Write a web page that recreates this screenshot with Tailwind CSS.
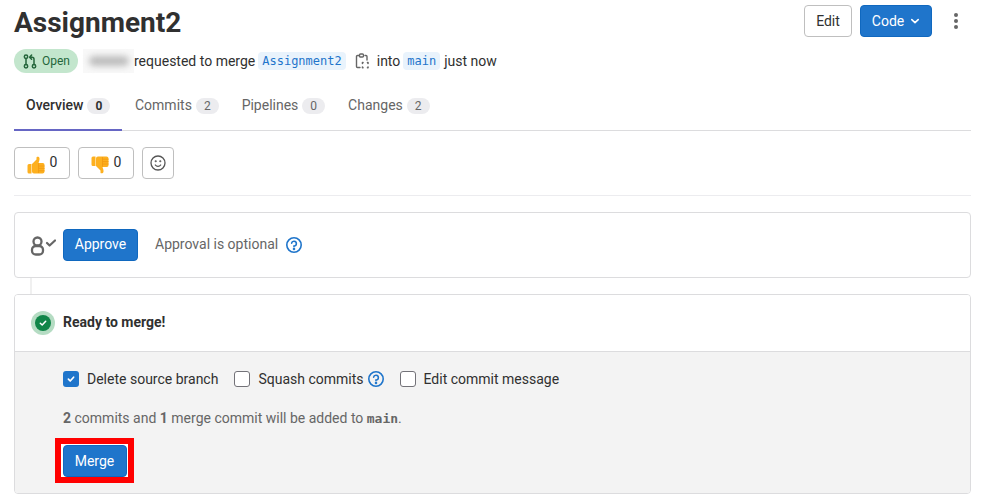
<!DOCTYPE html>
<html lang="en">
<head>
    <meta charset="UTF-8">
    <title>Assignment2</title>
    <script src="https://cdn.jsdelivr.net/npm/@tailwindcss/browser@4"></script>
</head>
<body class="bg-white h-[502px] overflow-hidden font-['Roboto',sans-serif] text-[14px] text-[#303030]">
    <div class="ml-[14px] w-[957px]">
        <!-- Title row -->
        <div class="flex items-start justify-between h-[46px] pt-[5px]">
            <h1 class="text-[28px] leading-[36px] font-bold text-[#303030]">Assignment2</h1>
            <div class="flex items-center">
                <button class="h-[32px] w-[48px] border border-[#bfbfbf] rounded-[4px] text-[#303030] bg-white">Edit</button>
                <button class="ml-[8px] h-[32px] w-[72px] rounded-[4px] bg-[#1f75cb] border border-[#1068bf] text-white flex items-center justify-center gap-[6px]">
                    Code
                    <svg width="10" height="10" viewBox="0 0 10 10" fill="none" stroke="white" stroke-width="1.6" stroke-linecap="round" stroke-linejoin="round"><path d="M1.8 3.6 5 6.6l3.2-3"/></svg>
                </button>
                <div class="ml-[22px] mr-[13px] flex flex-col gap-[2px]">
                    <span class="w-[4px] h-[4px] rounded-full bg-[#666]"></span>
                    <span class="w-[4px] h-[4px] rounded-full bg-[#666]"></span>
                    <span class="w-[4px] h-[4px] rounded-full bg-[#666]"></span>
                </div>
            </div>
        </div>

        <!-- Status line -->
        <div class="flex items-center h-[24px] mt-[3px]">
            <span class="flex items-center h-[24px] w-[64px] pl-[9px] rounded-full bg-[#c3e6cd] text-[#24663b] text-[12px] gap-[5px] shrink-0">
                <svg width="14" height="15" viewBox="0 0 14 15" fill="none" stroke="#24663b" stroke-width="1.5" stroke-linecap="round" stroke-linejoin="round"><circle cx="3" cy="2.8" r="1.7"/><circle cx="3" cy="12.2" r="1.7"/><circle cx="11" cy="12.2" r="1.7"/><path d="M3 4.5v6M11 10.5V5.2a2 2 0 0 0-2-2H7M8.6 1 6.6 3.2l2 2"/></svg>
                Open
            </span>
            <span class="ml-[5px] w-[51px] h-[24px] flex items-center justify-center bg-[#f8f8f8]">
                <span class="w-[40px] h-[10px] bg-[#bdbdbd] rounded-full blur-[3px]"></span>
            </span>
            <span>requested to merge</span>
            <code class="ml-[3px] px-[4px] h-[18px] leading-[18px] rounded-[4px] bg-[#e9f3fc] text-[#1f75cb] font-['DejaVu_Sans_Mono',monospace] text-[12px]">Assignment2</code>
            <svg class="ml-[9px]" width="15" height="16" viewBox="0 0 15 16" fill="none" stroke="#666" stroke-width="1.4" stroke-linecap="round" stroke-linejoin="round"><path d="M4 2.5H2.5A1 1 0 0 0 1.5 3.5v10a1 1 0 0 0 1 1H5M10 2.5h1a1 1 0 0 1 1 1V7"/><rect x="4.5" y="1" width="4" height="3" rx="1"/><path d="M8 9.5H7.5v1M12.5 9.5h.5v1M13 14v.7h-.5M8 14.7h-.5V14" stroke-width="1.6"/></svg>
            <span class="ml-[7px]">into</span>
            <code class="ml-[3px] px-[4px] h-[18px] leading-[18px] rounded-[4px] bg-[#e9f3fc] text-[#1f75cb] font-['DejaVu_Sans_Mono',monospace] text-[12px]">main</code>
            <span class="ml-[4px]">just now</span>
        </div>

        <!-- Tabs -->
        <div class="flex mt-[9px] h-[49px] border-b border-[#dcdcde]">
            <div class="flex items-center gap-[4px] w-[108px] pl-[12px] h-[49px] border-b-2 border-[#6666c4] font-medium text-[#303030]">
                Overview
                <span class="h-[16px] px-[8px] rounded-full bg-[#ececef] text-[12px] leading-[16px] font-bold">0</span>
            </div>
            <div class="flex items-center gap-[4px] ml-[13px] pb-[2px] text-[#666]">
                Commits
                <span class="h-[16px] mt-[2px] px-[8px] rounded-full bg-[#ececef] text-[12px] leading-[16px]">2</span>
            </div>
            <div class="flex items-center gap-[4px] ml-[23px] pb-[2px] text-[#666]">
                Pipelines
                <span class="h-[16px] mt-[2px] px-[8px] rounded-full bg-[#ececef] text-[12px] leading-[16px]">0</span>
            </div>
            <div class="flex items-center gap-[4px] ml-[23px] pb-[2px] text-[#666]">
                Changes
                <span class="h-[16px] mt-[2px] px-[8px] rounded-full bg-[#ececef] text-[12px] leading-[16px]">2</span>
            </div>
        </div>

        <!-- Award emoji -->
        <div class="flex items-center gap-[8px] pt-[16px] pb-[16px] border-b border-[#ececef]">
            <button class="h-[32px] w-[56px] border border-[#bfbfbf] rounded-[4px] flex items-center justify-center gap-[5px]">
                <svg class="mt-[4px]" width="18" height="18" viewBox="0 0 18 18"><path d="M.5 9.5A1.5 1.5 0 0 1 2 8h2.5v9.5H2A1.5 1.5 0 0 1 .5 16zM5 8l4.5-4.5V1.6C9.5.4 12.2.2 12.5 2.2 12.7 4 12 5.5 11.5 7H15.5A1.8 1.8 0 0 1 17.5 8.800V15.500A2 2 0 0 1 15.500 17.500H7A2 2 0 0 1 5 15.500z" fill="#fdb01f"/><path d="M11.500 7.200V17M11.500 10h6M11.500 12.400h6M11.500 14.800h6" stroke="#f39c12" stroke-width=".9" fill="none"/></svg>
                <span class="leading-[18px] -mt-[2px]">0</span>
            </button>
            <button class="h-[32px] w-[56px] border border-[#bfbfbf] rounded-[4px] flex items-center justify-center gap-[5px]">
                <svg class="mt-[4px]" width="18" height="18" viewBox="0 0 18 18"><g transform="translate(0 18) scale(1 -1)"><path d="M.5 9.500A1.500 1.500 0 0 1 2 8h2.500v9.500H2A1.500 1.500 0 0 1 .5 16zM5 8l4.500-4.500V1.600C9.500.4 12.200.2 12.500 2.200 12.700 4 12 5.500 11.500 7H15.500A1.800 1.800 0 0 1 17.500 8.800V15.500A2 2 0 0 1 15.500 17.500H7A2 2 0 0 1 5 15.500z" fill="#fdb01f"/><path d="M11.500 7.200V17M11.500 10h6M11.500 12.400h6M11.500 14.800h6" stroke="#f39c12" stroke-width=".9" fill="none"/></g></svg>
                <span class="leading-[18px] -mt-[2px]">0</span>
            </button>
            <button class="h-[32px] w-[32px] border border-[#bfbfbf] rounded-[4px] flex items-center justify-center">
                <svg width="16" height="16" viewBox="0 0 16 16" fill="none" stroke="#555" stroke-width="1.3" stroke-linecap="round"><circle cx="8" cy="8" r="7"/><circle cx="5.700" cy="6.300" r=".4" fill="#555"/><circle cx="10.300" cy="6.300" r=".4" fill="#555"/><path d="M5.300 10a3.300 3.300 0 0 0 5.400 0"/></svg>
            </button>
        </div>

        <!-- Approval card -->
        <div class="mt-[16px] h-[66px] border border-[#dcdcde] rounded-[4px] flex items-center bg-white">
            <svg class="ml-[15px] mt-[1px]" width="26" height="20" viewBox="0 0 26 20" fill="none" stroke="#666" stroke-width="2.300" stroke-linecap="round" stroke-linejoin="round"><circle cx="7.500" cy="5.500" r="4"/><rect x="2" y="10" width="11" height="8.500" rx="3.800"/><path d="M17 7l2.600 2.500L25 4.500" stroke-width="2.200"/></svg>
            <button class="ml-[7px] h-[32px] w-[75px] rounded-[4px] bg-[#1f75cb] border border-[#1068bf] text-white pb-[2px]">Approve</button>
            <span class="ml-[17px] text-[#666] -mt-[2px]">Approval is optional</span>
            <svg class="ml-[8px] -mt-[1px]" width="16" height="16" viewBox="0 0 16 16" fill="none" stroke="#1f75cb" stroke-width="1.6" stroke-linecap="round"><circle cx="8" cy="8" r="7.200"/><path d="M5.600 6.200A2.400 2.400 0 1 1 8 9v.7"/><circle cx="8" cy="12" r=".5" fill="#1f75cb"/></svg>
        </div>

        <!-- Connector -->
        <div class="ml-[16px] w-[2px] h-[16px] bg-[#f0f0f0]"></div>

        <!-- Merge widget -->
        <div class="border border-[#dcdcde] rounded-[4px] overflow-hidden">
            <div class="h-[57px] flex items-center border-b border-[#dcdcde] bg-white">
                <span class="ml-[16px] w-[24px] h-[24px] rounded-full bg-[#b5dcc3] flex items-center justify-center">
                    <span class="w-[16px] h-[16px] rounded-full bg-[#108548] flex items-center justify-center">
                        <svg width="8" height="8" viewBox="0 0 8 8" fill="none" stroke="white" stroke-width="1.500" stroke-linecap="round" stroke-linejoin="round"><path d="M1.300 4.200 3.200 6l3.500-3.800"/></svg>
                    </span>
                </span>
                <span class="ml-[8px] -mt-[2px] font-bold text-[#303030]">Ready to merge!</span>
            </div>
            <div class="h-[141px] bg-[#f3f3f3] pl-[48px] pt-[18px]">
                <div class="flex items-center h-[18px]">
                    <span class="w-[16px] h-[16px] rounded-[3px] bg-[#1f75cb] flex items-center justify-center">
                        <svg width="10" height="10" viewBox="0 0 10 10" fill="none" stroke="white" stroke-width="1.700" stroke-linecap="round" stroke-linejoin="round"><path d="M2.400 5.200 4.200 7l3.400-3.800"/></svg>
                    </span>
                    <span class="ml-[8px]">Delete source branch</span>
                    <span class="ml-[16px] w-[16px] h-[16px] rounded-[3px] bg-white border border-[#737278]"></span>
                    <span class="ml-[8px]">Squash commits</span>
                    <svg class="ml-[4px]" width="16" height="16" viewBox="0 0 16 16" fill="none" stroke="#1f75cb" stroke-width="1.600" stroke-linecap="round"><circle cx="8" cy="8" r="7.200"/><path d="M5.600 6.200A2.400 2.400 0 1 1 8 9v.7"/><circle cx="8" cy="12" r=".5" fill="#1f75cb"/></svg>
                    <span class="ml-[16px] w-[16px] h-[16px] rounded-[3px] bg-white border border-[#737278]"></span>
                    <span class="ml-[8px]">Edit commit message</span>
                </div>
                <p class="mt-[20px] leading-[20px] text-[#666]"><b class="font-bold">2</b> commits and <b class="font-bold">1</b> merge commit will be added to <b class="font-bold font-['DejaVu_Sans_Mono',monospace] text-[13px]">main</b>.</p>
                <div class="mt-[9px] -ml-[8px] w-[79px] h-[45px] border-[6px] border-[#ff0000] bg-white flex items-start justify-center pt-[1px]">
                    <button class="w-[64px] h-[32px] rounded-[4px] bg-[#1f75cb] border border-[#1068bf] text-white">Merge</button>
                </div>
            </div>
        </div>
    </div>
</body>
</html>
